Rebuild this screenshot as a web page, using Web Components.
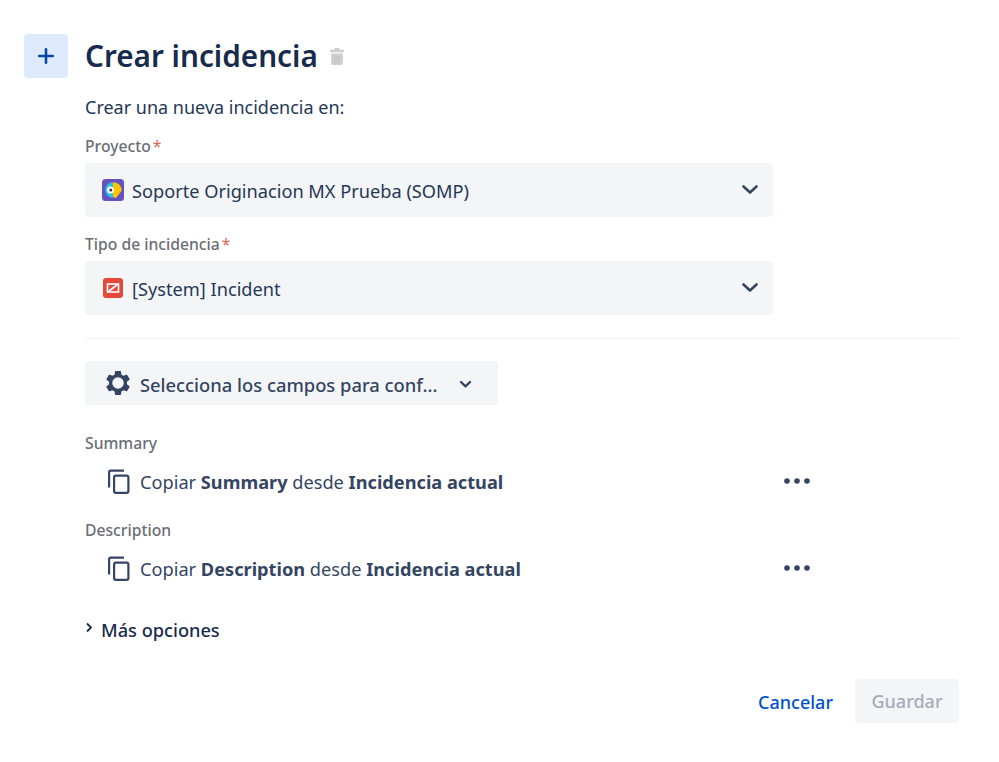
<!DOCTYPE html>
<html>
<head>
<meta charset="utf-8">
<title>Crear incidencia</title>
<style>
html, body { margin: 0; background: #fff; }
body { font-family: "Noto Sans", "Open Sans", sans-serif; }
</style>
</head>
<body>
<issue-form></issue-form>

<template id="select-tmpl">
<style>
:host { display: block; }
.label { height: 18px; line-height: 18px; font-size: 15.7px; font-weight: 500; color: #6b6e76; margin-bottom: 8px; }
.label span { color: #d9694f; margin-left: 2px; font-weight: 400; }
.box { height: 54px; box-sizing: border-box; width: 688px; background: #f4f5f7; border-radius: 4px; display: flex; align-items: center; padding: 0 13px 0 17px; color: #253858; font-size: 18.2px; }
.icon { width: 22px; height: 22px; margin-right: 8px; display: flex; }
.text { flex: 1; padding-top: 2px; }
svg { display: block; }
</style>
<div class="label"><slot name="label"></slot><span>*</span></div>
<div class="box">
  <div class="icon"><slot name="icon"></slot></div>
  <div class="text"><slot></slot></div>
  <svg width="20" height="20" viewBox="0 0 20 20"><path d="M3.500 6.500 10 12.500 16.500 6.500" fill="none" stroke="#344563" stroke-width="2.600" stroke-linecap="round" stroke-linejoin="round"/></svg>
</div>
</template>

<template id="copy-tmpl">
<style>
:host { display: block; }
.label { height: 18px; line-height: 18px; font-size: 15.7px; font-weight: 500; color: #6b6e76; margin-bottom: 14px; }
.row { display: flex; align-items: center; height: 32px; padding-left: 22px; color: #344563; font-size: 18.2px; width: 726px; box-sizing: border-box; }
.row svg { display: block; }
.text { flex: 1; margin-left: 9px; }
::slotted(b) { font-weight: 700; }
</style>
<div class="label"><slot name="label"></slot></div>
<div class="row">
  <svg width="24" height="26" viewBox="0 0 24 26"><path d="M2.100 18.500V3.200A1.600 1.600 0 0 1 3.700 1.600H17" fill="none" stroke="#344563" stroke-width="2.200"/><rect x="7.100" y="6.600" width="14.300" height="17.300" rx="1.800" fill="none" stroke="#344563" stroke-width="2.200"/></svg>
  <div class="text"><slot></slot></div>
  <svg width="28" height="8" viewBox="0 0 28 8" style="margin-top:-3px"><circle cx="4" cy="4" r="2.800" fill="#344563"/><circle cx="14" cy="4" r="2.800" fill="#344563"/><circle cx="24" cy="4" r="2.800" fill="#344563"/></svg>
</div>
</template>

<template id="form-tmpl">
<style>
:host { display: block; box-sizing: border-box; width: 999px; height: 762px; padding: 34px 40px 0 24px; color: #172b4d; }
header { display: flex; align-items: center; height: 44px; }
.plus { width: 44px; height: 44px; background: #deebff; border-radius: 4px; display: flex; align-items: center; justify-content: center; margin-right: 17px; }
h1 { margin: 0; font-size: 29.7px; font-weight: 600; line-height: 40px; color: #172b4d; }
.trash { margin-left: 11px; display: block; }
main { margin-left: 61px; }
.intro { font-size: 18px; line-height: 24px; color: #253858; margin: 17px 0 18px; height: 24px; }
issue-select + issue-select { margin-top: 18px; }
hr { border: 0; height: 1px; background: #f1f2f4; margin: 23px 0 22px; }
.fields { display: flex; align-items: center; width: 413px; height: 44px; box-sizing: border-box; background: #f4f5f7; border-radius: 4px; padding: 0 24px 0 18px; font-size: 18.35px; font-weight: 500; color: #344563; }
.fields span { flex: 1; margin-left: 7px; padding-top: 3px; }
.fields svg { display: block; }
.fields .caret { margin-top: 1px; }
issue-copy { margin-top: 23px; }
issue-copy.first { margin-top: 29px; }
.more { display: flex; align-items: center; margin-top: 31px; height: 28px; font-size: 18.2px; font-weight: 500; color: #172b4d; }
.more svg { margin-right: 7px; margin-top: -6px; display: block; }
footer { display: flex; justify-content: flex-end; align-items: center; margin-top: 35px; }
.cancel { font-size: 18px; font-weight: 500; color: #0052cc; margin-right: 22px; padding-top: 2px; }
.save { width: 104px; height: 44px; background: #f4f5f7; border-radius: 4px; display: flex; align-items: center; justify-content: center; font-size: 18px; font-weight: 500; color: #a5adba; }
</style>
<header>
  <div class="plus"><svg width="18" height="18" viewBox="0 0 18 18"><path d="M9 2.200V15.800M2.200 9H15.800" stroke="#0747a6" stroke-width="2.600" stroke-linecap="round"/></svg></div>
  <h1>Crear incidencia</h1>
  <svg class="trash" width="16" height="19" viewBox="0 0 18 21"><path d="M6 2.500A1.500 1.500 0 0 1 7.500 1h3A1.500 1.500 0 0 1 12 2.500V3h4.200A1 1 0 0 1 17 4v1.600H1V4a1 1 0 0 1 .8-1H6z" fill="#cfcfcf"/><path d="M2.400 7h13.200v11.400a1.600 1.600 0 0 1-1.600 1.600H4a1.600 1.600 0 0 1-1.600-1.600z" fill="#cfcfcf"/><path d="M6.500 9.500v8M9 9.500v8M11.500 9.500v8" stroke="#bdbdbd" stroke-width="1"/></svg>
</header>
<main>
  <div class="intro">Crear una nueva incidencia en:</div>
  <issue-select>
    <span slot="label">Proyecto</span>
    <svg slot="icon" width="22" height="22" viewBox="0 0 22 22"><rect width="22" height="22" rx="3.500" fill="#6554c0"/><path d="M11 3.200A7.800 7.800 0 0 0 11 18.800z" fill="#26c6e8"/><path d="M11 3.200A8.500 8.500 0 0 1 19.800 11.500L14 19l-3-1z" fill="#ffc400"/><circle cx="8.500" cy="11" r="3.500" fill="#fff"/><circle cx="8.800" cy="11" r="1.500" fill="#253858"/></svg>
    Soporte Originacion MX Prueba (SOMP)
  </issue-select>
  <issue-select>
    <span slot="label">Tipo de incidencia</span>
    <svg slot="icon" width="22" height="22" viewBox="0 0 22 22"><rect x="1" y="1" width="20" height="20" rx="3" fill="#e5493a"/><rect x="5.500" y="7" width="11" height="8" fill="none" stroke="#fff" stroke-width="1.600"/><path d="M6.500 14.500 15.500 7.500" stroke="#fff" stroke-width="1.600"/></svg>
    [System] Incident
  </issue-select>
  <hr>
  <div class="fields">
    <svg width="30" height="30" viewBox="0 0 24 24"><path fill="#344563" d="M19.140 12.940c.04-.3.06-.61.06-.94s-.02-.64-.07-.94l2.030-1.580a.49.49 0 0 0 .12-.61l-1.920-3.320a.49.49 0 0 0-.59-.22l-2.390.96a7 7 0 0 0-1.620-.94l-.36-2.540a.48.48 0 0 0-.48-.41h-3.840a.48.48 0 0 0-.47.41l-.36 2.540c-.59.24-1.130.57-1.620.94l-2.390-.96a.48.48 0 0 0-.59.22L2.740 8.870a.48.48 0 0 0 .12.61l2.030 1.580c-.05.3-.09.63-.09.94s.02.64.07.94l-2.030 1.580a.49.49 0 0 0-.12.61l1.920 3.320c.12.22.37.29.59.22l2.390-.96c.5.38 1.030.7 1.620.94l.36 2.540c.05.24.24.41.48.41h3.840c.24 0 .44-.17.47-.41l.36-2.540c.59-.24 1.130-.56 1.620-.94l2.390.96c.22.08.47 0 .59-.22l1.920-3.320a.48.48 0 0 0-.12-.61zM12 16.600A4.600 4.600 0 1 1 12 7.400a4.600 4.600 0 0 1 0 9.200z"/></svg>
    <span>Selecciona los campos para conf...</span>
    <svg class="caret" width="16" height="16" viewBox="0 0 16 16"><path d="M3 6 7.500 10.300 12 6" fill="none" stroke="#344563" stroke-width="2.400" stroke-linecap="round" stroke-linejoin="round"/></svg>
  </div>
  <issue-copy class="first"><span slot="label">Summary</span>Copiar <b>Summary</b> desde <b>Incidencia actual</b></issue-copy>
  <issue-copy><span slot="label">Description</span>Copiar <b>Description</b> desde <b>Incidencia actual</b></issue-copy>
  <div class="more"><svg width="9" height="11" viewBox="0 0 9 11"><path d="M2 1.500 6 5.500 2 9.500" fill="none" stroke="#172b4d" stroke-width="1.800"/></svg>Más opciones</div>
  <footer>
    <div class="cancel">Cancelar</div>
    <div class="save">Guardar</div>
  </footer>
</main>
</template>

<script>
function makeEl(name, tmplId) {
  customElements.define(name, class extends HTMLElement {
    constructor() {
      super();
      const shadow = this.attachShadow({mode: 'open'});
      shadow.appendChild(document.getElementById(tmplId).content.cloneNode(true));
    }
  });
}
makeEl('issue-select', 'select-tmpl');
makeEl('issue-copy', 'copy-tmpl');
makeEl('issue-form', 'form-tmpl');
</script>
</body>
</html>
